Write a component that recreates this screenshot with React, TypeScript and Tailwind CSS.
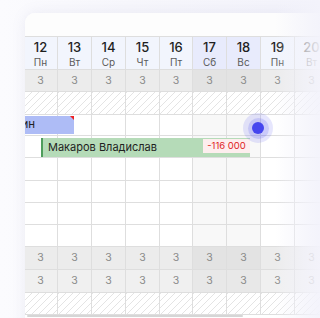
import React from "react";

const days = [
  { n: "12", d: "Пн", we: false },
  { n: "13", d: "Вт", we: false },
  { n: "14", d: "Ср", we: false },
  { n: "15", d: "Чт", we: false },
  { n: "16", d: "Пт", we: false },
  { n: "17", d: "Сб", we: true },
  { n: "18", d: "Вс", we: true },
  { n: "19", d: "Пн", we: false },
  { n: "20", d: "Вт", we: false },
];
const widths = ["w-[34px]", "w-[34px]", "w-[34px]", "w-[34px]", "w-[33px]", "w-[34px]", "w-[34px]", "w-[34px]", "w-[34px]"];

const hatch =
  "bg-[repeating-linear-gradient(135deg,#e4e4e4_0px,#e4e4e4_1px,#ffffff_1px,#ffffff_5px)]";

function Row({ h, kind }: { h: string; kind: "day" | "num" | "num2" | "hatch" | "blank" }) {
  return (
    <div className={`flex shrink-0 border-b border-[#dedede] ${h}`}>
      {days.map((d, i) => {
        let bg = "";
        let content: React.ReactNode = null;
        if (kind === "day") {
          bg = d.we ? "bg-[#e8ebfc]" : "bg-[#f2f5fd]";
          content = (
            <div className="flex flex-col items-center pt-[3px]">
              <span className="text-[13px] leading-[15px] font-medium text-[#1f1f1f]">{d.n}</span>
              <span className="text-[10px] leading-[11px] mt-[2px] text-[#5a5a5a]">{d.d}</span>
            </div>
          );
        } else if (kind === "num") {
          bg = d.we ? "bg-[#e3e3e3]" : "bg-[#ececec]";
          content = <span className="text-[10.5px] text-[#8a8a8a]">3</span>;
        } else if (kind === "num2") {
          bg = d.we ? "bg-[#e8e8e8]" : "bg-[#f0f0f0]";
          content = <span className="text-[10.5px] text-[#8a8a8a]">3</span>;
        } else if (kind === "hatch") {
          bg = hatch;
        } else {
          bg = d.we ? "bg-[#f8f8f8]" : "bg-white";
        }
        return (
          <div
            key={i}
            className={`${widths[i]} shrink-0 border-r border-[#dedede] flex justify-center ${
              kind === "day" ? "items-start" : "items-center"
            } ${bg}`}
          >
            {content}
          </div>
        );
      })}
    </div>
  );
}

export default function App() {
  return (
    <div
      className="relative w-[320px] h-[318px] overflow-hidden bg-[linear-gradient(90deg,#fbfbfe_0%,#f7f7fc_40%,#f3f3fb_100%)]"
      style={{ fontFamily: "Inter, 'Noto Sans', sans-serif" }}
    >
      <div className="absolute left-[25px] top-[13px] w-[310px] h-[320px] bg-white rounded-tl-[10px] overflow-hidden shadow-[0_0_14px_rgba(120,120,170,0.12)]">
        <div className="flex flex-col ml-[-1px]">
          <div className="h-[24px] shrink-0 border-b border-[#dedede] bg-[#fdfdfd]" />
          <Row h="h-[33px]" kind="day" />
          <Row h="h-[22px]" kind="num" />
          <Row h="h-[23px]" kind="hatch" />
          <Row h="h-[21px]" kind="blank" />
          <Row h="h-[22px]" kind="blank" />
          <Row h="h-[23px]" kind="blank" />
          <Row h="h-[22px]" kind="blank" />
          <Row h="h-[22px]" kind="blank" />
          <Row h="h-[22px]" kind="blank" />
          <Row h="h-[23px]" kind="num" />
          <Row h="h-[23px]" kind="num2" />
          <Row h="h-[22px]" kind="hatch" />
        </div>

        {/* blue bar */}
        <div className="absolute left-0 top-[103px] w-[49px] h-[18px] bg-[#aebcf6] flex items-center justify-end pr-[39px]">
          <span className="text-[11.5px] text-[#1f1f1f] whitespace-nowrap">Ильин</span>
          <div className="absolute right-0 top-0 w-0 h-0 border-t-[4px] border-l-[4px] border-t-[#f02020] border-l-transparent" />
        </div>

        {/* green bar */}
        <div className="absolute left-[16px] top-[125px] w-[209px] h-[19px] bg-[#b5dbb8] border-l-[2px] border-[#4e9d5c] flex items-center">
          <span className="pl-[5px] text-[11px] text-[#1f1f1f] whitespace-nowrap">Макаров Владислав</span>
          <div className="absolute right-0 top-[1px] w-[47px] h-[14px] bg-[#fdeeee] flex items-center justify-center">
            <span className="text-[9.5px] text-[#e02424] whitespace-nowrap">-116 000</span>
          </div>
        </div>

        {/* blue dot */}
        <div className="absolute left-[218px] top-[100px] w-[30px] h-[30px] rounded-full bg-[#5a5af0]/15 flex items-center justify-center">
          <div className="w-[21px] h-[21px] rounded-full bg-[#5a5af0]/20 flex items-center justify-center">
            <div className="w-[12px] h-[12px] rounded-full bg-[#4646ee]" />
          </div>
        </div>

        {/* scrollbar */}
        <div className="absolute left-[2px] top-[302px] w-[216px] h-[2px] rounded-full bg-[#d6d6d6]" />
      </div>

      {/* right fade */}
      <div className="absolute right-0 top-0 w-[45px] h-full bg-[linear-gradient(90deg,rgba(243,243,251,0)_0%,rgba(243,243,251,0.75)_70%,rgba(243,243,251,0.95)_100%)]" />
    </div>
  );
}
